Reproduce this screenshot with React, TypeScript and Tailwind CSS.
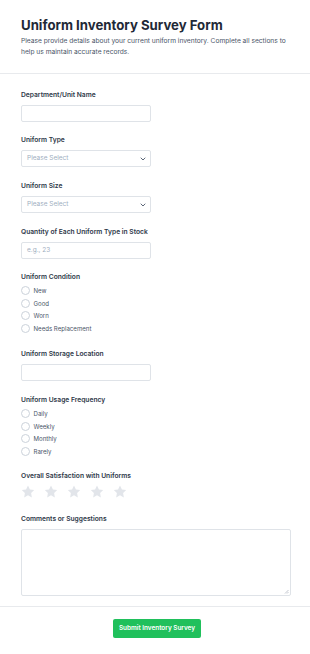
import React from "react";

const Label = ({ children }: { children: React.ReactNode }) => (
  <div className="text-[6.7px] leading-[10px] font-semibold text-[#2d3748] mb-[5px]">{children}</div>
);

const TextInput = ({ placeholder }: { placeholder?: string }) => (
  <div className="w-[130px] h-[17px] border border-[#dfe3e8] rounded-[2px] bg-white flex items-center px-[5px] text-[6.5px] text-[#a0aec0]">
    {placeholder}
  </div>
);

const Select = () => (
  <div className="w-[130px] h-[17px] border border-[#dfe3e8] rounded-[2px] bg-white flex items-center justify-between pl-[5px] pr-[4px] text-[6.5px] text-[#a0aec0]">
    <span>Please Select</span>
    <svg width="6" height="4" viewBox="0 0 6 4">
      <path d="M1 1l2 2 2-2" fill="none" stroke="#4a5568" strokeWidth="0.9" strokeLinecap="round" strokeLinejoin="round" />
    </svg>
  </div>
);

const Radios = ({ items }: { items: string[] }) => (
  <div className="flex flex-col gap-[3.7px] mt-[4px]">
    {items.map((it) => (
      <div key={it} className="flex items-center h-[9px]">
        <div className="w-[9px] h-[9px] rounded-full border border-[#cbd2da] bg-white" />
        <span className="ml-[3.5px] text-[6.1px] text-[#4a5568] leading-[9px]">{it}</span>
      </div>
    ))}
  </div>
);

const Star = () => (
  <svg width="14" height="13" viewBox="0 0 24 23">
    <path
      d="M12 0.8l3.4 7 7.6 1.1-5.5 5.4 1.3 7.6L12 18.3l-6.8 3.6 1.3-7.6L1 8.9l7.6-1.1z"
      fill="#e2e5ea"
    />
  </svg>
);

const GroupTitle = ({ children }: { children: React.ReactNode }) => (
  <div className="text-[6.7px] leading-[10px] font-semibold text-[#2d3748]">{children}</div>
);

export default function App() {
  return (
    <div className="w-[310px] bg-white" style={{ fontFamily: "Inter, 'Noto Sans', sans-serif" }}>
      <div className="px-[21px] pt-[14px] pb-[15px] border-b border-[#e8eaed]">
        <h1 className="text-[13.2px] leading-[22px] font-bold text-[#1f2937]">
          Uniform Inventory Survey Form
        </h1>
        <p className="text-[6.65px] leading-[11px] text-[#4a5568]">
          Please provide details about your current uniform inventory. Complete all sections to help us maintain accurate records.
        </p>
      </div>

      <div className="px-[21px] pt-[16px] pb-[10px] flex flex-col">
        <div className="mb-[13px]">
          <Label>Department/Unit Name</Label>
          <TextInput />
        </div>
        <div className="mb-[14px]">
          <Label>Uniform Type</Label>
          <Select />
        </div>
        <div className="mb-[14px]">
          <Label>Uniform Size</Label>
          <Select />
        </div>
        <div className="mb-[13px]">
          <Label>Quantity of Each Uniform Type in Stock</Label>
          <TextInput placeholder="e.g., 23" />
        </div>
        <div className="mb-[16px]">
          <GroupTitle>Uniform Condition</GroupTitle>
          <Radios items={["New", "Good", "Worn", "Needs Replacement"]} />
        </div>
        <div className="mb-[14px]">
          <Label>Uniform Storage Location</Label>
          <TextInput />
        </div>
        <div className="mb-[15px]">
          <GroupTitle>Uniform Usage Frequency</GroupTitle>
          <Radios items={["Daily", "Weekly", "Monthly", "Rarely"]} />
        </div>
        <div className="mb-[16px]">
          <GroupTitle>Overall Satisfaction with Uniforms</GroupTitle>
          <div className="flex gap-[9px] mt-[4px]">
            <Star />
            <Star />
            <Star />
            <Star />
            <Star />
          </div>
        </div>
        <div>
          <Label>Comments or Suggestions</Label>
          <div className="relative w-[270px] h-[67px] border border-[#dfe3e8] rounded-[2px] bg-white">
            <svg width="5" height="5" viewBox="0 0 5 5" className="absolute right-[1px] bottom-[1px]">
              <path d="M4.5 1L1 4.5M4.5 3L3 4.5" stroke="#9ca3af" strokeWidth="0.6" />
            </svg>
          </div>
        </div>
      </div>

      <div className="border-t border-[#e8eaed] pt-[12px] pb-[17px] pl-[4px] flex justify-center">
        <button className="h-[19px] px-[5.5px] rounded-[2px] bg-[#20c05c] text-white text-[6.4px] font-semibold">
          Submit Inventory Survey
        </button>
      </div>
    </div>
  );
}
